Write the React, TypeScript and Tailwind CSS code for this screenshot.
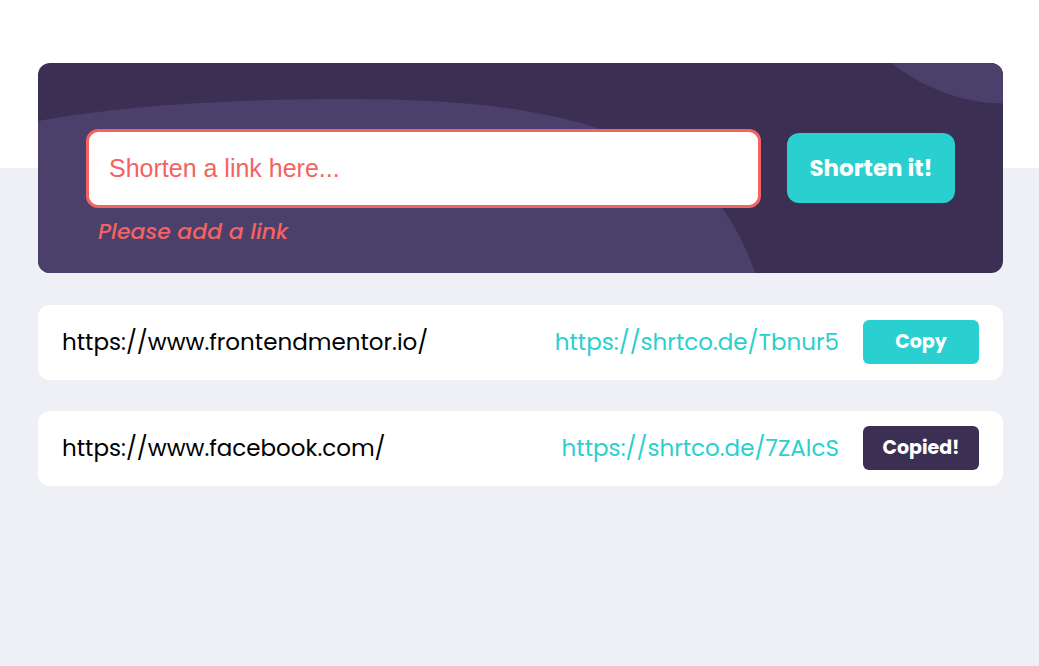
import { useState } from 'react';

type ShortLink = { original: string; short: string };

const LINKS: ShortLink[] = [
  { original: 'https://www.frontendmentor.io/', short: 'https://shrtco.de/Tbnur5' },
  { original: 'https://www.facebook.com/', short: 'https://shrtco.de/7ZAlcS' },
];

function PanelBackground() {
  return (
    <svg
      className="absolute inset-0 -z-10 h-full w-full"
      viewBox="0 0 965 210"
      preserveAspectRatio="none"
      fill="#4b3f6b"
      aria-hidden="true"
    >
      <path d="M0 58C80 43 190 36 310 36C430 36 505 47 562 66C620 85 655 105 684 145C700 167 709 188 717.5 210H0Z" />
      <path d="M853 0C885 24 922 40 965 40.500V0Z" />
    </svg>
  );
}

function ShortenForm() {
  const [value, setValue] = useState('');
  const invalid = value.trim() === '';
  return (
    <form
      className="relative isolate overflow-hidden rounded-xl bg-[#3b2f53] px-12 pt-[66px] pb-[23px]"
      onSubmit={(e) => e.preventDefault()}
      noValidate
    >
      <PanelBackground />
      <div className="flex items-start gap-[26px]">
        <input
          id="link"
          type="url"
          aria-label="Link to shorten"
          aria-invalid={invalid}
          aria-describedby="link-error"
          placeholder="Shorten a link here..."
          value={value}
          onChange={(e) => setValue(e.target.value)}
          className="h-[79px] min-w-0 flex-1 rounded-xl border-3 border-[#f46262] bg-white px-5 font-['Liberation_Sans',Arial,sans-serif] text-[25px] text-[#35323e] outline-none placeholder:text-[#f46262]"
        />
        <button
          type="submit"
          className="mt-1 h-[70px] w-[168px] shrink-0 rounded-xl bg-[#2acfcf] text-[23px] font-bold text-white"
        >
          Shorten it!
        </button>
      </div>
      <p
        id="link-error"
        className="mt-1.5 pl-3 text-[22px] leading-9 font-medium text-[#f46262] italic"
      >
        Please add a link
      </p>
    </form>
  );
}

function LinkCard({ link, copied, onCopy }: { link: ShortLink; copied: boolean; onCopy: () => void }) {
  return (
    <li className="flex items-start gap-6 rounded-xl bg-white px-6 pt-[15px] pb-4">
      <span className="min-w-0 flex-1 truncate text-[23px] leading-11 text-black">{link.original}</span>
      <a href={link.short} className="text-[23px] leading-11 text-[#2acfcf]">
        {link.short}
      </a>
      <button
        type="button"
        onClick={onCopy}
        className={
          copied
            ? 'h-11 w-[116px] shrink-0 rounded-md bg-[#3b2f53] text-[19px] leading-11 font-bold text-white'
            : 'h-11 w-[116px] shrink-0 rounded-md bg-[#2acfcf] text-[19px] leading-11 font-bold text-white'
        }
      >
        {copied ? 'Copied!' : 'Copy'}
      </button>
    </li>
  );
}

export default function App() {
  const [copied, setCopied] = useState(LINKS[1].short);
  return (
    <main className="min-h-screen bg-[#eff0f6] bg-linear-to-b from-white from-[168px] to-[#eff0f6] to-[168px] pt-[63px] pr-9 pb-12 pl-[38px] font-['Poppins','Inter',sans-serif]">
      <ShortenForm />
      <ul className="mt-8 flex flex-col gap-[31px]">
        {LINKS.map((link) => (
          <LinkCard
            key={link.short}
            link={link}
            copied={copied === link.short}
            onCopy={() => setCopied(link.short)}
          />
        ))}
      </ul>
    </main>
  );
}
